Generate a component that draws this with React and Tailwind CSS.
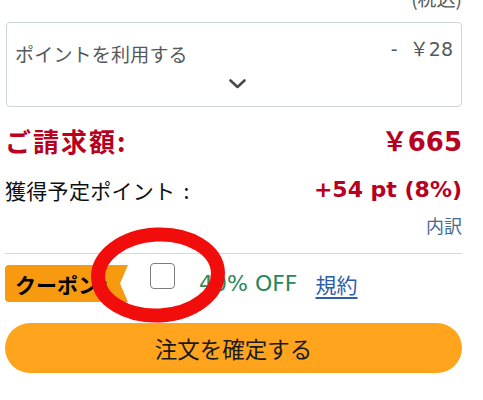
import React from "react";

export default function App() {
  const jp = "font-['Noto_Sans_CJK_JP','Noto_Sans',sans-serif]";
  const lat = "font-['DejaVu_Sans','Noto_Sans_CJK_JP',sans-serif]";
  return (
    <div className={`relative w-[483px] h-[400px] overflow-hidden bg-white text-[#0f1111] ${jp}`}>
      <div className="pl-[5px] pr-[21px]">
        <div className="h-[22px] overflow-hidden">
          <div className="-mt-[13px] text-right text-[19px] leading-[22px] text-[#565959]">(税込)</div>
        </div>
        <div className="ml-[1px] h-[85px] border border-[#cfd4d4] rounded-[4px] flex flex-col px-[8px]">
          <div className="h-[43px] flex items-start justify-between">
            <span className="mt-[19px] text-[19px] tracking-[0.2px] leading-[24px] text-[#565959]">ポイントを利用する</span>
            <span className="mt-[13px] text-[19px] leading-[24px] text-[#565959]">
              <span className={lat}>-&nbsp;&nbsp;</span>￥<span className={lat}>28</span>
            </span>
          </div>
          <div className="mt-[13px] flex justify-center pl-[6px]">
            <svg width="17" height="10" viewBox="0 0 17 10" fill="none">
              <path d="M1.5 1.5 L8.5 8 L15.5 1.5" stroke="#4a4a4a" strokeWidth="2.6" strokeLinecap="round" strokeLinejoin="round" />
            </svg>
          </div>
        </div>
        <div className="mt-[17px] h-[34px] flex items-center justify-between text-[#b8001f] font-bold">
          <span className="text-[26px] tracking-[2px] leading-[34px]">ご請求額:</span>
          <span className="text-[26px] leading-[34px]">
            ￥<span className={lat}>665</span>
          </span>
        </div>
        <div className="mt-[18px] h-[28px] flex items-center justify-between">
          <span className="text-[21px] tracking-[0.3px] leading-[28px]">
            獲得予定ポイント<span className="ml-[8px]">:</span>
          </span>
          <span className={`text-[22px] leading-[28px] font-bold text-[#b8001f] ${lat}`}>+54 pt (8%)</span>
        </div>
        <div className="mt-[9px] h-[24px] flex items-center justify-end">
          <span className="text-[18px] leading-[24px] text-[#4a6a92]">内訳</span>
        </div>
        <div className="mt-[16px] border-t border-[#d5d9d9]" />
        <div className="mt-[11px] h-[37px] flex items-center">
          <div className="h-[37px] w-[123px] bg-[#f79a10] rounded-l-[4px] [clip-path:polygon(0_0,100%_0,calc(100%-8px)_50%,100%_100%,0_100%)] flex items-center pl-[10px]">
            <span className="text-[21px] leading-[26px] font-bold text-black">
              クーポン<span className="ml-[2px]">:</span>
            </span>
          </div>
          <div className="ml-[22px] self-start -mt-[2px] w-[25px] h-[26px] border-[1.5px] border-[#7d7d7d] rounded-[4px] bg-white" />
          <span className={`ml-[24px] text-[22px] leading-[30px] text-[#2a8757] ${lat}`}>40% OFF</span>
          <span className="ml-[18px] text-[21px] leading-[30px] text-[#2f5ea8] underline underline-offset-[4px]">規約</span>
        </div>
        <div className="mt-[21px] h-[50px] rounded-full bg-[#ffa41c] flex items-center justify-center">
          <span className="text-[22.5px] leading-[30px] text-[#1a1a1a]">注文を確定する</span>
        </div>
      </div>
      <svg className="absolute left-[89px] top-[227px]" width="138" height="96" viewBox="0 0 138 96" fill="none">
        <ellipse cx="69" cy="48" rx="60" ry="40.5" stroke="#f20d0d" strokeWidth="14" transform="rotate(-3 69 48)" />
      </svg>
    </div>
  );
}
